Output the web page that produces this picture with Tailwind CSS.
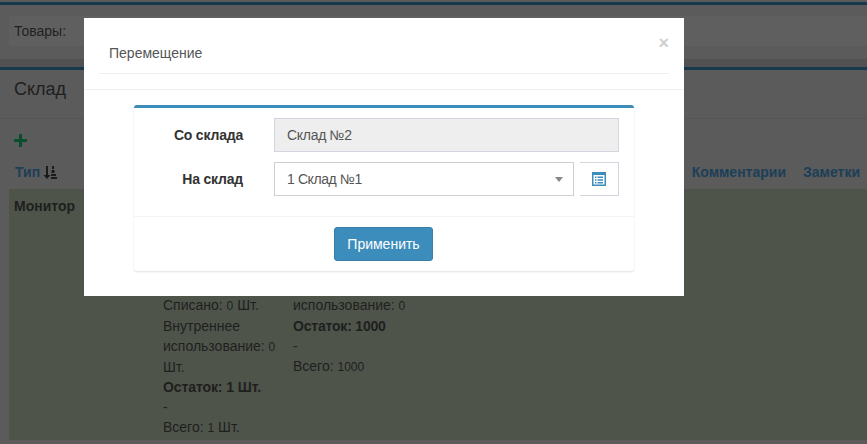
<!DOCTYPE html>
<html lang="ru">
<head>
    <meta charset="UTF-8">
    <title>Перемещение</title>
    <script src="https://cdn.jsdelivr.net/npm/@tailwindcss/browser@4"></script>
</head>
<body class="relative h-[444px] w-[867px] overflow-hidden bg-[#5b5b5b] font-['Liberation_Sans',Arial,sans-serif] text-[14px] leading-[20px] text-[#1f1f1f]">
    <!-- Page behind the backdrop -->
    <div class="pt-[2px]">
        <div class="h-[57px] border-t-[3px] border-[#17384d] pt-[11px] pl-[9px] shadow-[0_1px_0_#505050]">
            <div class="h-[30px] bg-[#5f5f5f] pl-[5px] pt-[5px]">Товары:</div>
        </div>
    </div>
    <div class="h-[8px] bg-[#525252]"></div>
    <div class="border-t-[3px] border-[#17384d]">
        <div class="h-[49px] border-b border-[#555] pl-[14px] pt-[9px] text-[18px] leading-[20px]">Склад</div>
        <div class="pl-[14px] pt-[15px]">
            <svg class="block" width="13" height="13" viewBox="0 0 13 13"><path d="M5 0h3v5h5v3H8v5H5V8H0V5h5z" fill="#0a4f2d"/></svg>
        </div>
        <div class="relative flex h-[42px] items-start pt-[15px] font-bold text-[#1c3f58]">
            <div class="flex items-center gap-[3px] pl-[15px]">
                <span>Тип</span>
                <svg width="14" height="13" viewBox="0 0 14 13" fill="#1b1b1b"><path d="M3 0h2v9h2.500L4 13 .5 9H3z"/><path d="M9 0h2v3H9zM8.500 4h3v3h-3zM8 8h5v2H8zM8 11h6v2H8z"/></svg>
            </div>
            <span class="ml-auto">Комментарии</span>
            <span class="ml-[17px] mr-[7px]">Заметки</span>
        </div>
        <div class="ml-[9px] flex h-[251px] bg-[#4e544a] pt-[7px]">
            <div class="w-[154px] pl-[5px] font-bold">Монитор</div>
            <div class="w-[130px] pt-[99px]">
                <div>Списано: <span class="text-[12px]">0</span> Шт.</div>
                <div>Внутреннее использование: <span class="text-[12px]">0</span> Шт.</div>
                <div class="font-bold tracking-[-0.1px]">Остаток: 1 Шт.</div>
                <div>-</div>
                <div>Всего: <span class="text-[12px]">1</span> Шт.</div>
            </div>
            <div class="w-[130px] pt-[99px]">
                <div>использование: <span class="text-[12px]">0</span></div>
                <div class="font-bold tracking-[-0.2px]">Остаток: 1000</div>
                <div>-</div>
                <div>Всего: <span class="text-[12px]">1000</span></div>
            </div>
        </div>
    </div>

    <!-- Modal -->
    <div class="absolute left-[84px] top-[18px] h-[278px] w-[600px] bg-white text-[#333]">
        <div class="relative h-[72px] border-b border-[#f0f0f0] pt-[15px]">
            <div class="mx-[15px] h-[41px] border-b border-[#f0f0f0] pl-[10px] pt-[10px] text-[#555]">Перемещение</div>
            <span class="absolute right-[15px] top-[15px] text-[18px] leading-[20px] font-bold text-[#cfcfcf]">×</span>
        </div>
        <div class="ml-[50px] mt-[15px] h-[166px] w-[500px] rounded-[3px] border-t-[3px] border-[#3c8dbc] bg-white shadow-[0_1px_2px_rgba(0,0,0,0.12)]">
            <div class="h-[109px] border-b border-[#f4f4f4] pl-[15px] pt-[10px] pr-[15px]">
                <div class="flex items-center">
                    <div class="w-[94px] text-right font-bold tracking-[-0.2px]">Со склада</div>
                    <div class="ml-[31px] h-[34px] w-[345px] border border-[#d2d6de] bg-[#eee] pl-[12px] pt-[6px] tracking-[-0.3px] text-[#555]">Склад №2</div>
                </div>
                <div class="mt-[10px] flex items-center">
                    <div class="w-[94px] text-right font-bold tracking-[-0.2px]">На склад</div>
                    <div class="relative ml-[31px] h-[34px] w-[300px] border border-[#cfcfcf] bg-white pl-[12px] pt-[6px] tracking-[-0.4px] text-[#555]">
                        1 Склад №1
                        <span class="absolute right-[10px] top-[14px] h-0 w-0 border-x-[4px] border-t-[5px] border-x-transparent border-t-[#888]"></span>
                    </div>
                    <div class="ml-[6px] flex h-[34px] w-[39px] items-center justify-center border-y border-r border-[#d2d6de] bg-white">
                        <svg width="14" height="14" viewBox="0 0 14 14"><path fill="#3c8dbc" fill-rule="evenodd" d="M0 0h14v14H0zM1.500 3v9.500h11V3z"/><path fill="#3c8dbc" d="M3 4.500h1.500V6H3zM5.500 4.500H11V6H5.500zM3 7.200h1.500v1.500H3zM5.500 7.200H11v1.500H5.500zM3 10h1.500v1.500H3zM5.500 10H11v1.500H5.500z"/></svg>
                    </div>
                </div>
            </div>
            <div class="flex pl-[200px] pt-[10px]">
                <button class="h-[34px] w-[99px] rounded-[3px] border border-[#367fa9] bg-[#3c8dbc] text-white">Применить</button>
            </div>
        </div>
    </div>
</body>
</html>
